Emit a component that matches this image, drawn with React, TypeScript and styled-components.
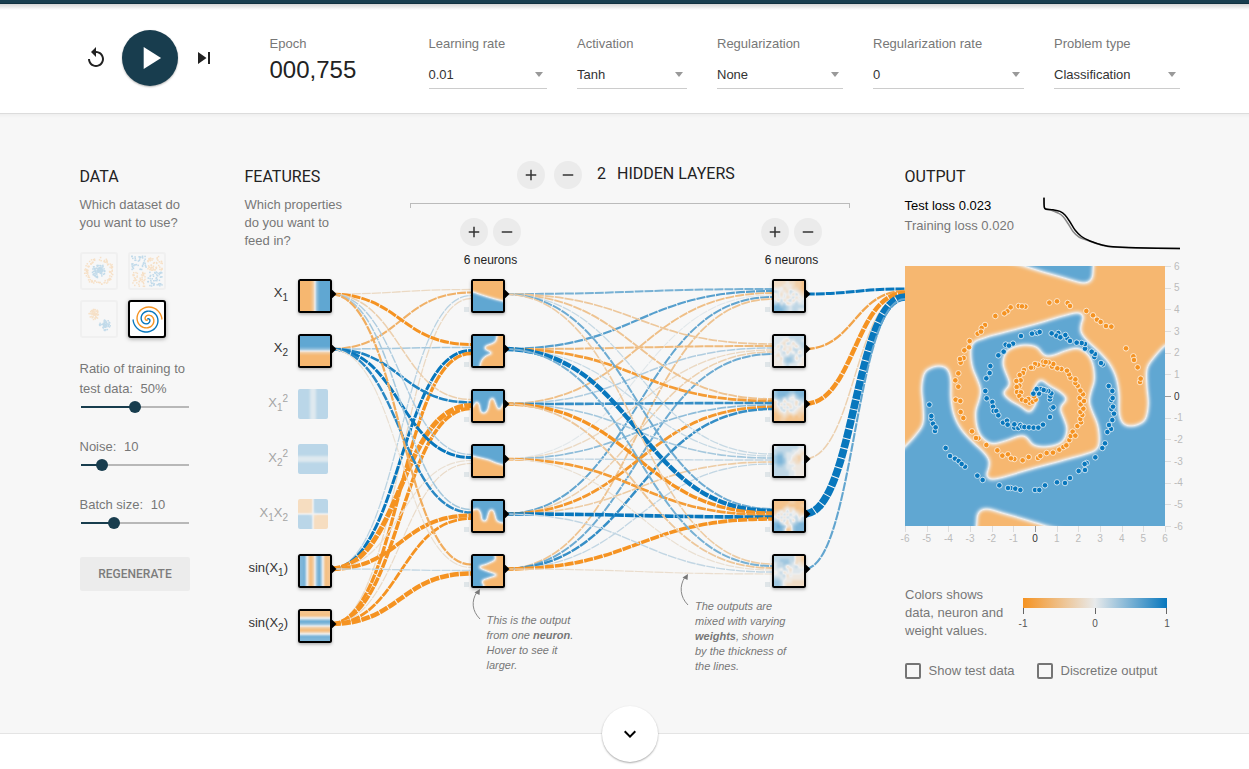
import React from "react";
import styled, { createGlobalStyle } from "styled-components";
import {
  MdReplay,
  MdPlayArrow,
  MdSkipNext,
  MdAdd,
  MdRemove,
  MdKeyboardArrowDown,
} from "react-icons/md";

/* ---------- palette and helpers ---------- */

const NAVY = "#183d4e";
const ORANGE = "#f59322";
const BLUE = "#0877bd";
const TEXT_FONT = '"Liberation Sans", Arial, sans-serif';
const HEAD_FONT = 'Roboto, "Liberation Sans", sans-serif';

type Point = [number, number];

const mix = (a: number[], b: number[], t: number) =>
  `rgb(${a.map((v, i) => Math.round(v + (b[i] - v) * t)).join(",")})`;

const weightColor = (w: number) =>
  mix([232, 234, 235], w < 0 ? [245, 147, 34] : [8, 119, 189], Math.min(1, Math.abs(w)));

const clamp = (v: number, lo: number, hi: number) => Math.max(lo, Math.min(hi, v));

/* Catmull-Rom spline through the points, as cubic segments */
function smoothPath(pts: Point[]) {
  let d = `M${pts[0][0]},${pts[0][1]}`;
  for (let i = 0; i < pts.length - 1; i++) {
    const p0 = pts[Math.max(0, i - 1)];
    const p1 = pts[i];
    const p2 = pts[i + 1];
    const p3 = pts[Math.min(pts.length - 1, i + 2)];
    d += `C${p1[0] + (p2[0] - p0[0]) / 6},${p1[1] + (p2[1] - p0[1]) / 6} ${
      p2[0] - (p3[0] - p1[0]) / 6
    },${p2[1] - (p3[1] - p1[1]) / 6} ${p2[0]},${p2[1]}`;
  }
  return d;
}

function seeded(seed: number) {
  let s = seed;
  return () => {
    s = (s * 16807) % 2147483647;
    return s / 2147483647;
  };
}

/* ---------- page ---------- */

const GlobalStyle = createGlobalStyle`
  * { box-sizing: border-box; }
  body {
    margin: 0;
    background: #fff;
    font-family: ${TEXT_FONT};
    font-size: 13px;
    color: #777;
    overflow: hidden;
  }
  button { font: inherit; border: 0; padding: 0; cursor: pointer; }
`;

const Page = styled.div`
  width: 1249px;
  height: 769px;
  display: flex;
  flex-direction: column;
`;

const TopBar = styled.div`
  height: 4px;
  flex: none;
  background: ${NAVY};
  border-bottom: 1px solid #10303f;
`;

const Header = styled.header`
  height: 110px;
  flex: none;
  display: flex;
  align-items: flex-start;
  padding: 26px 0 0 79.5px;
  background: linear-gradient(#d4d4d4, #fff 6px);
  border-bottom: 1px solid #dcdcdc;
`;

const Transport = styled.div`
  display: flex;
  align-items: center;
  width: 190px;
`;

const IconButton = styled.button<{ $w: number }>`
  width: ${(p) => p.$w}px;
  height: 24px;
  display: flex;
  justify-content: center;
  background: none;
  color: #222;
  svg { flex: none; }
`;

const PlayButton = styled.button`
  width: 56px;
  height: 56px;
  margin: 0 9.5px 0 10.5px;
  border-radius: 50%;
  display: flex;
  align-items: center;
  justify-content: center;
  background: ${NAVY};
  color: #fff;
  box-shadow: 0 1px 2px rgba(0, 0, 0, 0.3);
`;

const Field = styled.div<{ $w: number }>`
  width: ${(p) => p.$w}px;
  margin-right: 30px;
  padding-top: 5px;
`;

const FieldLabel = styled.div`
  line-height: 18px;
`;

const EpochValue = styled.div`
  margin-top: 3px;
  font-size: 24px;
  line-height: 28px;
  color: #222;
`;

const SelectBox = styled.div`
  height: 29px;
  margin-top: 7px;
  padding-right: 4.5px;
  display: flex;
  align-items: center;
  justify-content: space-between;
  border-bottom: 1px solid #ccc;
  color: #333;
`;

const Caret = styled.span`
  border: 4.5px solid transparent;
  border-top: 5px solid #999;
  border-bottom: 0;
  margin-top: 1px;
`;

const Main = styled.main`
  height: 620px;
  flex: none;
  display: flex;
  align-items: flex-start;
  padding: 47px 0 0 80px;
  background: linear-gradient(#efefef, #f7f7f7 4px);
  border-bottom: 1px solid #e4e4e4;
`;

const Footer = styled.footer`
  display: flex;
  justify-content: center;
  flex: 1;
`;

const MoreButton = styled.button`
  width: 56px;
  height: 56px;
  margin: -28px 0 0 11px;
  z-index: 1;
  border-radius: 50%;
  display: flex;
  align-items: center;
  justify-content: center;
  background: #fff;
  color: #000;
  box-shadow: 0 1px 2px rgba(0, 0, 0, 0.35);
`;

const Heading = styled.h4`
  margin: 6px 0 0 -0.5px;
  font: 400 16px/20px ${HEAD_FONT};
  color: #222;
`;

const Copy = styled.p`
  margin: 9px 0 0 -0.5px;
  line-height: 18px;
  white-space: nowrap;
`;

/* ---------- data column ---------- */

const DataColumn = styled.section`
  width: 110px;
  margin-right: 55px;
`;

const Datasets = styled.div`
  margin-top: 20px;
  display: grid;
  grid-template-columns: 38px 38px;
  gap: 10px;
`;

const Dataset = styled.div<{ $active?: boolean }>`
  width: 38px;
  height: 38px;
  border: 2px solid ${(p) => (p.$active ? "#000" : "#d8d8d8")};
  border-radius: 3px;
  background: ${(p) => (p.$active ? "#fff" : "none")};
  opacity: ${(p) => (p.$active ? 1 : 0.22)};
  box-shadow: ${(p) => (p.$active ? "0 1px 4px rgba(0,0,0,.35)" : "none")};
  svg { display: block; }
`;

const SliderBlock = styled.div<{ $top: number }>`
  margin: ${(p) => p.$top}px 0 0 -0.5px;
  line-height: 20px;
`;

const SliderValue = styled.span`
  margin-left: 4px;
`;

const Track = styled.div<{ $at: number }>`
  height: 12px;
  margin: 2px 1px 0 1.5px;
  display: flex;
  align-items: center;
  background: linear-gradient(
      to right,
      ${NAVY} ${(p) => p.$at}px,
      #b8b8b8 ${(p) => p.$at}px
    )
    center / 100% 2px no-repeat;
`;

const Thumb = styled.div<{ $at: number }>`
  width: 12px;
  height: 12px;
  margin-left: ${(p) => p.$at - 6}px;
  border-radius: 50%;
  background: ${NAVY};
`;

const Regenerate = styled.button`
  width: 110px;
  height: 34px;
  margin-top: 28px;
  border-radius: 2px;
  background: #ececec;
  color: #7c7c7c;
  font: 500 12px/34px ${HEAD_FONT};
`;

type DotKind = "circle" | "xor" | "gauss";

function dotsFor(kind: DotKind): { p: Point; c: string }[] {
  const rnd = seeded(kind === "circle" ? 11 : kind === "xor" ? 23 : 47);
  const out: { p: Point; c: string }[] = [];
  const n = kind === "gauss" ? 110 : 190;
  for (let i = 0; i < n; i++) {
    if (kind === "xor") {
      const x = (rnd() - 0.5) * 29;
      const y = (rnd() - 0.5) * 29;
      const px = x + Math.sign(x) * 0.8;
      const py = y + Math.sign(y) * 0.8;
      out.push({ p: [17 + px, 17 + py], c: x * y > 0 ? BLUE : ORANGE });
    } else if (kind === "circle") {
      const a = rnd() * Math.PI * 2;
      const inner = i % 2 === 0;
      const r = inner ? rnd() * 7 : 10.5 + rnd() * 4;
      out.push({ p: [17 + r * Math.cos(a), 17 + r * Math.sin(a)], c: inner ? BLUE : ORANGE });
    } else {
      const a = rnd() * Math.PI * 2;
      const r = rnd() * 5.5;
      const blue = i % 2 === 0;
      out.push({
        p: [(blue ? 23 : 12) + r * Math.cos(a), (blue ? 23 : 12) + r * Math.sin(a)],
        c: blue ? BLUE : ORANGE,
      });
    }
  }
  return out;
}

const DotThumb = ({ kind }: { kind: DotKind }) => (
  <svg width="34" height="34">
    {dotsFor(kind).map((d, i) => (
      <rect key={i} x={d.p[0] - 0.7} y={d.p[1] - 0.7} width="1.5" height="1.5" fill={d.c} />
    ))}
  </svg>
);

const spiralArm = (delta: number) => {
  const pts: Point[] = [];
  for (let i = 0; i <= 60; i++) {
    const r = (i / 60) * 14.5;
    const t = (1.75 * i * 2 * Math.PI) / 60 + delta;
    pts.push([17.5 + r * Math.sin(t), 17.5 - r * Math.cos(t)]);
  }
  return smoothPath(pts);
};

const SpiralThumb = () => (
  <svg width="34" height="34" fill="none" strokeWidth="1.4">
    <path d={spiralArm(0)} stroke={BLUE} />
    <path d={spiralArm(Math.PI)} stroke={ORANGE} />
  </svg>
);

const Slider = ({ label, value, at, top }: { label: React.ReactNode; value: string; at: number; top: number }) => (
  <SliderBlock $top={top}>
    {label} <SliderValue>{value}</SliderValue>
    <Track $at={at}>
      <Thumb $at={at} />
    </Track>
  </SliderBlock>
);

/* ---------- network ---------- */

const NetworkSection = styled.section`
  width: 660px;
`;

const NetworkHead = styled.div`
  height: 107px;
  display: flex;
`;

const FeaturesIntro = styled.div`
  width: 165px;
`;

const LayersHead = styled.div`
  width: 440px;
`;

const LayersTitle = styled.div`
  display: flex;
  align-items: center;
  gap: 9px;
  padding-left: 107px;
`;

const RoundButton = styled.button`
  width: 28px;
  height: 28px;
  border-radius: 50%;
  display: flex;
  align-items: center;
  justify-content: center;
  background: #ebebeb;
  color: #333;
`;

const LayerCount = styled.span`
  padding: 0 2px 3px 6px;
  font: 400 16px/20px ${HEAD_FONT};
  color: #222;
`;

const LayerText = styled(LayerCount)`
  padding: 0 0 3px;
`;

const Bracket = styled.div`
  height: 5px;
  margin-top: 14px;
  border: 1px solid #bbb;
  border-bottom: 0;
`;

const LayerControls = styled.div`
  display: flex;
  gap: 240px;
  padding: 10px 0 0 50px;
`;

const LayerControl = styled.div`
  width: 61px;
  display: flex;
  flex-wrap: wrap;
  gap: 6px 5px;
  font-size: 12px;
  line-height: 16px;
  color: #222;
  text-align: center;
`;

const NeuronCount = styled.div`
  width: 61px;
`;

const Canvas = styled.div`
  position: relative;
  height: 420px;
`;

const Diagram = styled.svg`
  display: block;
  width: 660px;
  height: 420px;
`;

const Callout = styled.div<{ $x: number; $y: number }>`
  position: absolute;
  left: ${(p) => p.$x}px;
  top: ${(p) => p.$y}px;
  font-size: 11px;
  line-height: 15px;
  font-style: italic;
  white-space: nowrap;
`;

const FEATURE_X = 53;
const HIDDEN_X = [226, 527];
const OUTPUT_X = 660;
const rowY = (i: number) => 26 + 55 * i;

/* weights[target][source]: [signed strength, stroke width] */
type Weight = [number, number];

const LAYER_1: Weight[][] = [
  [[-0.2, 1.3], [-0.65, 2.1], [0.2, 1.3], [-0.2, 1.3]],
  [[-1, 3], [0.3, 1.5], [1, 3], [-1, 3.3]],
  [[-0.3, 1.5], [0.9, 2.6], [-1, 5], [-1, 3.5]],
  [[0.25, 1.4], [1, 3], [-0.12, 1.2], [-0.17, 1.2]],
  [[0.3, 1.5], [0.85, 2.5], [-1, 4], [-1, 2.8]],
  [[-0.7, 2.2], [-0.12, 1.2], [0.17, 1.3], [-1, 4.6]],
];

const LAYER_2: Weight[][] = [
  [[0.5, 2], [0.65, 2.2], [-0.5, 1.9], [0.03, 1.1], [0.6, 2], [-0.45, 1.8]],
  [[-0.4, 1.7], [-0.55, 2], [0.25, 1.5], [-0.2, 1.4], [-0.3, 1.5], [0.55, 2]],
  [[-0.45, 1.9], [-0.9, 2.7], [0.8, 2.6], [0.4, 1.7], [-0.95, 2.8], [0.8, 2.5]],
  [[0.15, 1.3], [0.15, 1.3], [0.3, 1.6], [0.17, 1.4], [-0.35, 1.6], [0.17, 1.3]],
  [[0.55, 2], [1, 4.4], [-1, 3.4], [-0.9, 2.7], [1, 3.6], [-1, 3.6]],
  [[-0.35, 1.6], [0.5, 2], [-0.4, 1.8], [-0.12, 1.2], [0.17, 1.4], [-0.15, 1.2]],
];

const OUTPUT_WEIGHTS: Weight[][] = [
  [[1, 3], [-0.8, 2.3], [-1, 4.5], [-0.3, 1.5], [1, 7.6], [0.6, 2.1]],
];

function Links({ weights, from, to, sources }: { weights: Weight[][]; from: number; to: number; sources: number[] }) {
  const x0 = from + 32;
  const mid = (x0 + to) / 2;
  return (
    <g fill="none" strokeDasharray="9 1" strokeDashoffset="-1.67">
      {weights.map((w, i) =>
        sources.map((row, j) => {
          const y0 = rowY(row);
          const n = sources.length;
          const y1 = rowY(i) + ((j - (n - 1) / 2) / n) * 12;
          return (
            <path
              key={`${i}-${j}`}
              d={`M${x0},${y0}C${mid},${y0} ${mid},${y1} ${to},${y1}`}
              stroke={weightColor(w[j][0])}
              strokeWidth={w[j][1]}
            />
          );
        })
      )}
    </g>
  );
}

/* Turns a blurred greyscale drawing into the orange / neutral / blue scale */
const HeatFilter = ({ id, blur }: { id: string; blur: number }) => (
  <filter id={id} x="-10%" y="-10%" width="120%" height="120%" colorInterpolationFilters="sRGB">
    <feGaussianBlur stdDeviation={blur} />
    <feComponentTransfer>
      <feFuncR type="table" tableValues="0.965 0.933 0.38" />
      <feFuncG type="table" tableValues="0.72 0.937 0.655" />
      <feFuncB type="table" tableValues="0.443 0.939 0.827" />
    </feComponentTransfer>
  </filter>
);

const gray = (v: number) => {
  const g = Math.round(clamp(v, 0, 1) * 255);
  return `rgb(${g},${g},${g})`;
};

/* 10 x 10 cells over a 30px square; the outer cells run past the edge so that the blur stays flat there */
const CellMap = ({ value }: { value: (col: number, row: number) => number }) => (
  <g filter="url(#heatCells)">
    {Array.from({ length: 100 }, (_, k) => {
      const c = k % 10;
      const r = Math.floor(k / 10);
      const x0 = c === 0 ? -6 : c * 3;
      const x1 = c === 9 ? 36 : c * 3 + 3;
      const y0 = r === 0 ? -6 : r * 3;
      const y1 = r === 9 ? 36 : r * 3 + 3;
      return (
        <rect
          key={k}
          x={x0}
          y={y0}
          width={x1 - x0}
          height={y1 - y0}
          fill={gray(value(c, r))}
          shapeRendering="crispEdges"
        />
      );
    })}
  </g>
);

const coord = (k: number) => -6 + 1.2 * (k + 0.5);

/* A label is a list of runs; the number is how far the run drops below the baseline */
type Run = [string, number];

const FEATURES: { label: Run[]; active: boolean; f: (x: number, y: number) => number }[] = [
  { label: [["X", 0], ["1", 4]], active: true, f: (x) => x },
  { label: [["X", 0], ["2", 4]], active: true, f: (_, y) => y },
  { label: [["X", 0], ["1", 4], ["2", -5]], active: false, f: (x) => x * x },
  { label: [["X", 0], ["2", 4], ["2", -5]], active: false, f: (_, y) => y * y },
  { label: [["X", 0], ["1", 4], ["X", 0], ["2", 4]], active: false, f: (x, y) => x * y * 2.2 },
  { label: [["sin(X", 0], ["1", 4], [")", 0]], active: true, f: (x) => Math.sin(x) },
  { label: [["sin(X", 0], ["2", 4], [")", 0]], active: true, f: (_, y) => Math.sin(y) },
];

const FormulaRuns = ({ runs }: { runs: Run[] }) => (
  <>
    {runs.map(([text, drop], i) => (
      <tspan key={i} dy={drop - (i ? runs[i - 1][1] : 0)} fontSize={drop ? 10 : 13}>
        {text}
      </tspan>
    ))}
  </>
);

/* Blue areas of the first hidden layer, each in a 30px square */
const HIDDEN_SHAPES: { edge: Point[]; close: string }[] = [
  { edge: [[-6, 11], [0, 11], [6, 13], [15, 16], [22, 18], [30, 20], [36, 22]], close: "L36,36 L-6,36Z" },
  { edge: [[24, -6], [24, 0], [22, 6], [13, 10], [12, 13], [19, 17], [13, 20], [9, 24], [7, 30], [7, 36]], close: "L-6,36 L-6,-6Z" },
  { edge: [[-6, 17], [0, 16], [3, 11], [6, 13], [8, 21], [12, 22], [15, 18], [17, 9], [20, 7], [22, 11], [25, 18], [28, 17], [30, 13], [36, 12]], close: "L36,-6 L-6,-6Z" },
  { edge: [[-6, 9], [0, 10], [8, 12], [16, 14], [23, 17], [30, 19], [36, 21]], close: "L36,-6 L-6,-6Z" },
  { edge: [[-6, 9], [0, 9], [5, 8], [8, 13], [9, 19], [13, 20], [15, 14], [17, 9], [20, 9], [22, 14], [24, 20], [30, 22], [36, 22]], close: "L36,-6 L-6,-6Z" },
  { edge: [[21, -6], [22, 0], [22, 4], [14, 8], [6, 11], [14, 15], [24, 19], [16, 22], [9, 25], [11, 30], [11, 36]], close: "L-6,36 L-6,-6Z" },
];

/* Second hidden layer, sampled: 0 is orange, 9 is blue */
const HIDDEN_CELLS = [
  ["3333433221", "3334443221", "4453443321", "6544365432", "4535453643", "4545346354", "5363563545", "6756345655", "8877656666", "8887656655"],
  ["5555566666", "5554355665", "5543653566", "5364445356", "4553536655", "5456354635", "4355566465", "4536776354", "4446776554", "4445655544"],
  ["7888877888", "7888765788", "6775644677", "3563555356", "3636345364", "3463635543", "2356365433", "1234334322", "1123212121", "1122111111"],
  ["5666666655", "6666665544", "6776555443", "7886554324", "7887553324", "7887544335", "6776555444", "6666554444", "6666655444", "6666655444"],
  ["1111122111", "1111211112", "1113433111", "2353635321", "3636364533", "5363645646", "6636363656", "8864356788", "8987437888", "8886127888"],
  ["6666666332", "6677766332", "5667765343", "5666355644", "5546535555", "4563545554", "5556354444", "6655444444", "7764443333", "7764333333"],
];

const Tile = ({ x, row, children }: { x: number; row: number; children: React.ReactNode }) => (
  <g transform={`translate(${x},${rowY(row) - 15})`}>
    <path d="M33.5,10.5 L38.2,15 L33.5,19.5Z" fill="#000" stroke="#000" strokeWidth="0.6" />
    <rect width="34" height="34" rx="2.5" fill="#000" filter="url(#tileShadow)" />
    <svg x="2" y="2" width="30" height="30" viewBox="0 0 30 30" overflow="hidden">
      {children}
    </svg>
  </g>
);

const Network = () => (
  <Diagram viewBox="0 0 660 420">
    <defs>
      <HeatFilter id="heatTile" blur={1.5} />
      <HeatFilter id="heatCells" blur={1.15} />
      <filter id="tileShadow" x="-30%" y="-30%" width="160%" height="160%">
        <feDropShadow dx="0" dy="1.5" stdDeviation="1.6" floodOpacity="0.3" />
      </filter>
      <clipPath id="roundTile">
        <rect width="30" height="30" rx="2" />
      </clipPath>
    </defs>

    <Links weights={LAYER_1} from={FEATURE_X} to={HIDDEN_X[0]} sources={[0, 1, 5, 6]} />
    <Links weights={LAYER_2} from={HIDDEN_X[0]} to={HIDDEN_X[1]} sources={[0, 1, 2, 3, 4, 5]} />
    <Links weights={OUTPUT_WEIGHTS} from={HIDDEN_X[1]} to={OUTPUT_X} sources={[0, 1, 2, 3, 4, 5]} />

    {FEATURES.map((ft, i) => {
      const map = <CellMap value={(c, r) => (clamp(ft.f(coord(c), -coord(r)), -1, 1) + 1) / 2} />;
      return (
        <g key={i}>
          <text
            x="43"
            y={rowY(i) + 3}
            textAnchor="end"
            fill={ft.active ? "#333" : "#a5a5a5"}
          >
            <FormulaRuns runs={ft.label} />
          </text>
          {ft.active ? (
            <Tile x={FEATURE_X} row={i}>{map}</Tile>
          ) : (
            <g transform={`translate(${FEATURE_X},${rowY(i) - 15})`} opacity="0.4">
              <g clipPath="url(#roundTile)">{map}</g>
            </g>
          )}
        </g>
      );
    })}

    {HIDDEN_X.map((x, layer) =>
      HIDDEN_SHAPES.map((shape, i) => (
        <g key={`${layer}-${i}`}>
          <rect x={x - 7} y={rowY(i) + 13} width="5" height="5" fill="#dfe5e8" />
          <Tile x={x} row={i}>
            {layer === 0 ? (
              <g filter="url(#heatTile)">
                <rect x="-6" y="-6" width="42" height="42" fill="#000" />
                <path d={smoothPath(shape.edge) + shape.close} fill="#fff" />
              </g>
            ) : (
              <CellMap value={(c, r) => Number(HIDDEN_CELLS[i][r][c]) / 9} />
            )}
          </Tile>
        </g>
      ))
    )}

    <g fill="none" stroke="#888">
      <path d="M235,351 C227,343 226,333 232,324" />
      <path d="M443,337 C435,329 434,318 440,309" />
    </g>
    <g fill="#777">
      <path d="M235,321 L234.5,327 L229.5,324.5Z" />
      <path d="M443,306 L442.5,312 L437.5,309.5Z" />
    </g>
  </Diagram>
);

/* ---------- output ---------- */

const OutputSection = styled.section`
  width: 290px;
`;

const LossRow = styled.div`
  height: 70px;
  margin: 4px 0 0 -0.5px;
  padding-top: 5px;
  display: flex;
  justify-content: space-between;
  width: 275.5px;
  line-height: 20px;
`;

const LossValue = styled.div<{ $strong?: boolean }>`
  color: ${(p) => (p.$strong ? "#000" : "#777")};
`;

const Plot = styled.svg`
  display: block;
  width: 290px;
  height: 284px;
  margin-top: 5px;
  overflow: visible;
`;

const LegendRow = styled.div`
  display: flex;
  margin-top: 36px;
  line-height: 18px;
`;

const LegendText = styled.div`
  width: 113px;
  white-space: nowrap;
`;

const Legend = styled.svg`
  display: block;
  margin-top: 7px;
  overflow: visible;
`;

const Options = styled.div`
  display: flex;
  margin-top: 22px;
`;

const Option = styled.label<{ $w: number }>`
  width: ${(p) => p.$w}px;
  display: flex;
  align-items: center;
  gap: 7.5px;
  line-height: 18px;
  white-space: nowrap;
`;

const Checkbox = styled.span`
  width: 16px;
  height: 16px;
  border: 2px solid #757575;
  border-radius: 2px;
`;

/* Decision boundary on a 780-unit square, from the left edge to the centre.
   The other half is the same line turned by 180 degrees. */
const HALF_EDGE: Point[] = [
  [30, 575], [62, 540], [84, 505], [84, 450], [80, 400], [88, 355], [107, 339], [130, 333], [155, 340],
  [167, 370], [168, 430], [177, 480], [198, 522], [230, 558], [262, 588], [282, 615], [281, 640], [275, 662],
  [292, 673], [340, 662], [420, 638], [500, 617], [570, 598], [605, 583], [613, 555], [608, 510], [592, 470],
  [583, 440], [588, 410], [598, 375], [594, 330], [578, 298], [548, 280], [512, 287], [475, 301], [452, 303],
  [439, 292], [425, 276], [395, 270], [360, 275], [333, 292], [324, 325], [333, 355], [344, 385], [334, 402],
  [325, 415], [345, 436], [375, 453], [402, 471], [416, 458], [424, 440], [420, 423],
];
const turn = ([x, y]: Point): Point => [840 - x, 846 - y];
const FULL_EDGE = [...HALF_EDGE, ...HALF_EDGE.slice(0, -1).reverse().map(turn)];

const ORANGE_DOTS: Point[] = [
  [463, 143], [486, 139], [518, 144], [525, 153], [574, 168], [594, 181], [606, 194], [617, 201], [633, 213],
  [649, 215], [693, 280], [715, 304], [717, 315], [728, 337], [735, 381], [737, 371], [371, 153], [391, 155], [381, 154],
  [347, 157], [337, 169], [328, 175], [301, 183], [270, 210], [260, 219], [248, 236], [258, 230], [224, 258],
  [222, 277], [208, 286], [206, 309], [197, 323], [195, 312], [190, 355], [181, 376], [190, 395], [182, 434],
  [196, 438], [197, 471], [205, 489], [231, 529], [250, 550], [243, 549], [274, 570], [307, 586], [322, 602],
  [339, 598], [358, 612], [348, 610], [383, 616], [401, 606], [429, 609], [436, 603], [455, 594], [474, 593],
  [493, 584], [505, 576], [514, 571], [523, 555], [527, 543], [533, 530], [541, 542], [547, 513], [558, 502],
  [556, 492], [562, 480], [556, 471], [565, 461], [557, 448], [567, 438], [554, 429], [564, 418], [556, 407],
  [548, 392], [541, 384], [541, 373], [526, 368], [522, 358], [516, 347], [499, 342], [487, 340], [471, 335],
  [475, 327], [461, 322], [446, 329], [445, 320], [452, 321], [429, 329], [420, 327], [414, 338], [408, 338],
  [387, 345], [384, 354], [374, 360], [377, 376], [364, 378], [373, 392], [365, 396], [366, 411], [378, 412],
  [373, 423], [381, 434], [404, 443], [413, 440], [422, 434], [400, 432], [392, 438], [417, 424],
];
const BLUE_DOTS: Point[] = [
  [103, 449], [109, 491], [109, 483], [114, 506], [120, 528], [122, 517], [152, 579], [165, 603], [180, 611],
  [191, 618], [210, 635], [200, 627], [247, 662], [263, 675], [313, 691], [347, 699], [361, 701], [339, 699],
  [376, 705], [420, 705], [433, 705], [450, 691], [486, 682], [510, 684], [525, 669], [551, 648], [570, 645],
  [575, 624], [569, 627], [601, 607], [622, 579], [630, 565], [648, 522], [637, 531], [642, 510], [652, 495],
  [657, 476], [649, 462], [654, 455], [649, 435], [653, 429], [652, 408], [641, 393], [623, 328], [618, 324],
  [598, 306], [600, 297], [590, 290], [570, 281], [570, 267], [560, 264], [545, 263], [517, 250], [525, 258],
  [511, 240], [490, 234], [484, 242], [496, 247], [470, 235], [421, 232], [427, 234], [434, 231], [411, 236],
  [378, 243], [354, 266], [332, 269], [342, 272], [326, 290], [310, 301], [286, 333], [284, 354], [274, 370],
  [271, 408], [275, 430], [292, 441], [294, 455], [296, 468], [304, 468], [310, 481], [324, 503], [336, 497],
  [338, 509], [358, 518], [358, 508], [370, 519], [376, 510], [381, 515], [388, 516], [402, 517], [416, 518],
  [430, 518], [444, 509], [465, 486], [470, 460], [475, 457], [465, 433], [466, 424], [469, 415], [460, 408],
  [452, 407], [438, 402], [446, 405], [432, 416], [420, 408], [425, 402], [415, 416],
];

const TICKS = Array.from({ length: 13 }, (_, i) => i - 6);

const OutputPlot = () => (
  <Plot viewBox="0 0 290 284">
    <defs>
      <HeatFilter id="heatOutput" blur={6.5} />
    </defs>
    <svg width="260" height="260" viewBox="30 33 780 780" overflow="hidden">
      <g filter="url(#heatOutput)">
        <rect x="0" y="0" width="840" height="846" fill="#000" />
        <path d={`${smoothPath(FULL_EDGE)} L840,260 L840,846 L0,846 L0,600Z`} fill="#fff" />
        <path d="M300,10 L385,32 C430,48 500,66 545,80 C572,89 595,85 594,50 L597,10Z" fill="#fff" />
        <path d="M540,836 L455,814 C410,798 340,780 295,766 C268,757 245,761 246,796 L243,836Z" fill="#000" />
      </g>
      <g stroke="#fff" strokeOpacity="0.7" strokeWidth="3">
        {ORANGE_DOTS.map(([x, y], i) => (
          <circle key={i} cx={x} cy={y} r="8.3" fill={ORANGE} />
        ))}
        {BLUE_DOTS.map(([x, y], i) => (
          <circle key={i} cx={x} cy={y} r="8.3" fill={BLUE} />
        ))}
      </g>
    </svg>
    <g fontSize="10" shapeRendering="crispEdges">
      {TICKS.map((t) => {
        const p = ((t + 6) * 260) / 12;
        const q = 260 - p;
        const line = t === 0 ? "#999" : "#ddd";
        const fill = t === 0 ? "#333" : "#bbb";
        return (
          <g key={t} fill={fill}>
            <line x1={p + 0.5} x2={p + 0.5} y1="260" y2="266" stroke={line} />
            <line x1="260" x2="266" y1={q + 0.5} y2={q + 0.5} stroke={line} />
            <text x={p} y="276" textAnchor="middle">{t}</text>
            <text x={269} y={q + 3.5}>{t}</text>
          </g>
        );
      })}
    </g>
  </Plot>
);

const TEST_LOSS: Point[] = [
  [1, 0], [1.2, 8], [2.5, 11], [10, 11.8], [17, 13.4], [22, 17], [27, 24], [32, 32], [38.5, 38.5], [47, 43],
  [60, 47.2], [70, 48.8], [93, 49.8], [137, 50.6],
];
const TRAIN_LOSS: Point[] = [
  [1, -1], [1.2, 8], [2.5, 11], [9, 12.5], [15, 15], [20, 18.5], [25, 25.5], [30, 33.5], [36, 39], [47, 43.2],
  [60, 47.4], [70, 49], [93, 50], [137, 50.6],
];

const SELECTS = [
  { label: "Learning rate", value: "0.01", w: 118.5 },
  { label: "Activation", value: "Tanh", w: 110 },
  { label: "Regularization", value: "None", w: 126 },
  { label: "Regularization rate", value: "0", w: 151 },
  { label: "Problem type", value: "Classification", w: 126 },
];

export default function App() {
  return (
    <Page>
      <GlobalStyle />
      <TopBar />
      <Header>
        <Transport>
          <IconButton $w={32}><MdReplay size={24} /></IconButton>
          <PlayButton><MdPlayArrow size={38} /></PlayButton>
          <IconButton $w={33}><MdSkipNext size={24} /></IconButton>
        </Transport>
        <Field $w={129}>
          <FieldLabel>Epoch</FieldLabel>
          <EpochValue>000,755</EpochValue>
        </Field>
        {SELECTS.map((s) => (
          <Field key={s.label} $w={s.w}>
            <FieldLabel>{s.label}</FieldLabel>
            <SelectBox>
              {s.value}
              <Caret />
            </SelectBox>
          </Field>
        ))}
      </Header>

      <Main>
        <DataColumn>
          <Heading>DATA</Heading>
          <Copy>Which dataset do<br />you want to use?</Copy>
          <Datasets>
            <Dataset><DotThumb kind="circle" /></Dataset>
            <Dataset><DotThumb kind="xor" /></Dataset>
            <Dataset><DotThumb kind="gauss" /></Dataset>
            <Dataset $active><SpiralThumb /></Dataset>
          </Datasets>
          <Slider top={21} at={54} value="50%" label={<>Ratio of training to<br />test data:</>} />
          <Slider top={24} at={21} value="10" label="Noise:" />
          <Slider top={24} at={33} value="10" label="Batch size:" />
          <Regenerate>REGENERATE</Regenerate>
        </DataColumn>

        <NetworkSection>
          <NetworkHead>
            <FeaturesIntro>
              <Heading>FEATURES</Heading>
              <Copy>Which properties<br />do you want to<br />feed in?</Copy>
            </FeaturesIntro>
            <LayersHead>
              <LayersTitle>
                <RoundButton><MdAdd size={18} /></RoundButton>
                <RoundButton><MdRemove size={18} /></RoundButton>
                <LayerCount>2</LayerCount>
                <LayerText>HIDDEN LAYERS</LayerText>
              </LayersTitle>
              <Bracket />
              <LayerControls>
                {[0, 1].map((k) => (
                  <LayerControl key={k}>
                    <RoundButton><MdAdd size={18} /></RoundButton>
                    <RoundButton><MdRemove size={18} /></RoundButton>
                    <NeuronCount>6 neurons</NeuronCount>
                  </LayerControl>
                ))}
              </LayerControls>
            </LayersHead>
          </NetworkHead>
          <Canvas>
            <Network />
            <Callout $x={241.5} $y={345}>
              This is the output<br />from one <b>neuron</b>.<br />Hover to see it<br />larger.
            </Callout>
            <Callout $x={450} $y={331}>
              The outputs are<br />mixed with varying<br /><b>weights</b>, shown<br />by the thickness of<br />the lines.
            </Callout>
          </Canvas>
        </NetworkSection>

        <OutputSection>
          <Heading>OUTPUT</Heading>
          <LossRow>
            <div>
              <LossValue $strong>Test loss 0.023</LossValue>
              <LossValue>Training loss 0.020</LossValue>
            </div>
            <svg width="137" height="56" viewBox="0 -2 137 56" fill="none" strokeWidth="1.5">
              <path d={smoothPath(TRAIN_LOSS)} stroke="#888" />
              <path d={smoothPath(TEST_LOSS)} stroke="#000" />
            </svg>
          </LossRow>
          <OutputPlot />
          <LegendRow>
            <LegendText>Colors shows<br />data, neuron and<br />weight values.</LegendText>
            <Legend width="160" height="36" viewBox="0 -5 160 36">
              <defs>
                <linearGradient id="scale">
                  <stop offset="0" stopColor={ORANGE} />
                  <stop offset="0.5" stopColor="#e8eaeb" />
                  <stop offset="1" stopColor={BLUE} />
                </linearGradient>
              </defs>
              <rect x="5" width="144" height="10" fill="url(#scale)" />
              <g stroke="#666" shapeRendering="crispEdges">
                <path d="M5.5,10V16M77.5,10V16M148.5,10V16" />
              </g>
              <g fontSize="10" fill="#555" textAnchor="middle">
                <text x="5" y="29">-1</text>
                <text x="77" y="29">0</text>
                <text x="149" y="29">1</text>
              </g>
            </Legend>
          </LegendRow>
          <Options>
            <Option $w={132}><Checkbox />Show test data</Option>
            <Option $w={130}><Checkbox />Discretize output</Option>
          </Options>
        </OutputSection>
      </Main>
      <Footer>
        <MoreButton><MdKeyboardArrowDown size={24} /></MoreButton>
      </Footer>
    </Page>
  );
}
